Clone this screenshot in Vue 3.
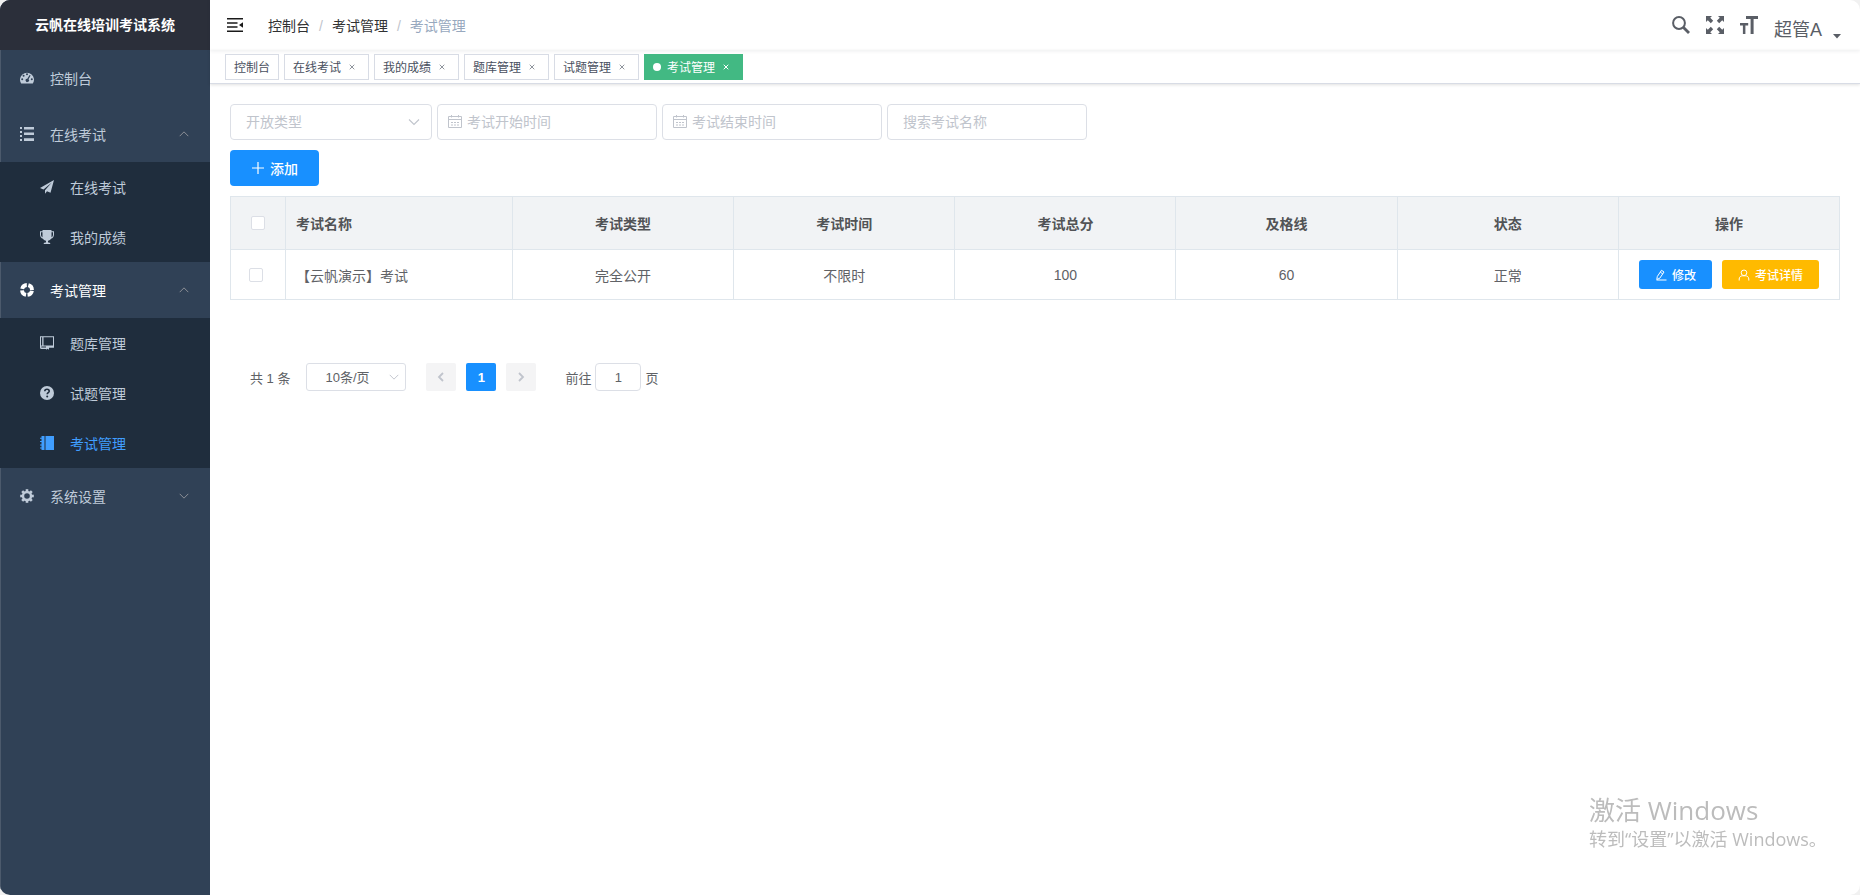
<script setup>
import { ref } from 'vue'

const menu = [
  { title: '控制台', icon: 'dashboard' },
  {
    title: '在线考试',
    icon: 'list',
    open: true,
    children: [
      { title: '在线考试', icon: 'guide' },
      { title: '我的成绩', icon: 'trophy' }
    ]
  },
  {
    title: '考试管理',
    icon: 'support',
    open: true,
    current: true,
    children: [
      { title: '题库管理', icon: 'bank' },
      { title: '试题管理', icon: 'help' },
      { title: '考试管理', icon: 'log', active: true }
    ]
  },
  { title: '系统设置', icon: 'gear', open: false, children: [] }
]

const tags = [
  { title: '控制台', fixed: true },
  { title: '在线考试' },
  { title: '我的成绩' },
  { title: '题库管理' },
  { title: '试题管理' },
  { title: '考试管理', active: true }
]

const columns = ['考试类型', '考试时间', '考试总分', '及格线', '状态', '操作']
const rows = [
  { name: '【云帆演示】考试', type: '完全公开', time: '不限时', total: 100, pass: 60, state: '正常' }
]

const openType = ref('')
const startTime = ref('')
const endTime = ref('')
const keyword = ref('')
const pageSize = ref('10')
const page = ref('1')

const teeth = [0, 45, 90, 135, 180, 225, 270, 315]
</script>

<template>
  <div class="frame">
    <svg class="defs" aria-hidden="true">
      <symbol id="i-dashboard" viewBox="0 0 14 14">
        <path fill-rule="evenodd" d="M1.2 12.4A7 6.8 0 1 1 12.8 12.4H1.2ZM7 2.3a1 1 0 1 0 0 2 1 1 0 0 0 0-2ZM3.6 3.7a1 1 0 1 0 0 2 1 1 0 0 0 0-2ZM2.2 7.2a1 1 0 1 0 0 2 1 1 0 0 0 0-2ZM11.8 7.2a1 1 0 1 0 0 2 1 1 0 0 0 0-2ZM9.6 4 7.3 7.7a1.7 1.7 0 1 0 1.2.5L10.6 4.600Z" />
      </symbol>
      <symbol id="i-list" viewBox="0 0 14 14">
        <path d="M0 0h2v2H0zM4 0h10v2.500H4zM0 4h2v2H0zM4 5.500h10V8H4zM0 8h2v2H0zM4 11.200h10V14H4zM0 12h2v2H0z" />
      </symbol>
      <symbol id="i-guide" viewBox="0 0 14 14">
        <path d="M14 0 0 7.900l3.500 1.500L11.800 2.500 5 10.200V13.800l2-2.600 3.500 1.500Z" />
      </symbol>
      <symbol id="i-trophy" viewBox="0 0 14 14">
        <path fill-rule="evenodd" d="M2.500 0h9v1.300H14V4.500c0 2.300-1.200 3.700-3 4.200-.6 1-1.600 1.700-3 2v1.800c1.400 0 2.200.4 2.400 1.500H3.600c.2-1.100 1-1.500 2.400-1.500v-1.800c-1.400-.3-2.400-1-3-2-1.800-.5-3-1.900-3-4.200V1.300h2.500ZM1 2.300v2.200c0 1.400.5 2.300 1.500 2.800V2.300Zm10.500 0v5C12.500 6.800 13 5.900 13 4.500V2.300Z" />
      </symbol>
      <symbol id="i-support" viewBox="0 0 14 14">
        <circle cx="7" cy="7" r="5" fill="none" stroke="currentColor" stroke-width="3.800" stroke-dasharray="6.250 1.604" stroke-dashoffset="-.8" />
      </symbol>
      <symbol id="i-bank" viewBox="0 0 14 14">
        <path fill-rule="evenodd" d="M0 .3h14v11.400H9V13.800L7.500 12.700 6 13.800V13H1.500A1.500 1.500 0 0 1 0 11.500ZM1 1.300v8.300h1.200V1.300Zm2.500 0v8.300H13V1.300ZM1.300 10.600v.9h4.700v-.9Z" />
      </symbol>
      <symbol id="i-help" viewBox="0 0 14 14">
        <circle cx="7" cy="7" r="7" />
        <path d="M4.800 5.300c0-1.300 1-2 2.200-2s2.200.8 2.200 1.900C9.200 6.700 7.200 6.700 7.200 8.300" fill="none" stroke="#1f2d3d" stroke-width="1.600" />
        <circle cx="7.200" cy="10.500" r="1" fill="#1f2d3d" />
      </symbol>
      <symbol id="i-log" viewBox="0 0 14 14">
        <path d="M1.500 0h3v14h-3v-1.500H0v-1h1.500v-2H0v-1h1.500v-2.500H0V5h1.500V2.800H0v-1h1.500zM5.500 0H14v14H5.500z" />
      </symbol>
      <symbol id="i-gear" viewBox="0 0 14 14">
        <circle cx="7" cy="7" r="4" fill="none" stroke="currentColor" stroke-width="2.400" />
        <rect v-for="a in teeth" :key="a" x="5.700" y=".2" width="2.600" height="2.600" :transform="`rotate(${a} 7 7)`" />
      </symbol>
      <symbol id="i-calendar" viewBox="0 0 14 14">
        <path d="M.5 1.500h13v11H.5zM.5 4.500h13M3.500 0v2.500M10.500 0v2.500M3 7.500h2M6 7.500h2M9 7.500h2M3 10h2M6 10h2M9 10h2" fill="none" stroke="currentColor" />
      </symbol>
      <symbol id="i-down" viewBox="0 0 14 14">
        <path d="m2 4.500 5 5 5-5" fill="none" stroke="currentColor" stroke-width="1.100" />
      </symbol>
    </svg>

    <aside class="sidebar">
      <h1 class="brand">云帆在线培训考试系统</h1>
      <nav>
        <ul class="menu">
          <li v-for="item in menu" :key="item.title">
            <a href="#" class="entry" :class="{ current: item.current }">
              <svg class="glyph"><use :href="'#i-' + item.icon" /></svg>
              <span>{{ item.title }}</span>
              <svg v-if="item.children" class="fold" :class="{ up: item.open }"><use href="#i-down" /></svg>
            </a>
            <ul v-if="item.open" class="submenu">
              <li v-for="sub in item.children" :key="sub.title">
                <a href="#" class="entry sub" :class="{ active: sub.active }">
                  <svg class="glyph"><use :href="'#i-' + sub.icon" /></svg>
                  <span>{{ sub.title }}</span>
                </a>
              </li>
            </ul>
          </li>
        </ul>
      </nav>
    </aside>

    <div class="main">
      <header class="navbar">
        <button class="bare" aria-label="折叠菜单">
          <svg width="16" height="14" viewBox="0 0 16 14">
            <path d="M0 0h16v1.600H0zM0 4.200h10.500v1.600H0zM0 8.200h10.500v1.600H0zM0 12.400h16V14H0zM16 4.200v5.600L12 7z" fill="#1a1a1a" />
          </svg>
        </button>
        <nav class="crumbs">
          <a href="#">控制台</a><i>/</i><a href="#">考试管理</a><i>/</i><span>考试管理</span>
        </nav>
        <div class="tools">
          <button class="bare" aria-label="搜索">
            <svg width="18" height="18" viewBox="0 0 18 18" fill="none" stroke="currentColor">
              <circle cx="7" cy="7" r="5.900" stroke-width="2" />
              <path d="m11.500 11.500 5.500 5.500" stroke-width="2.800" />
            </svg>
          </button>
          <button class="bare" aria-label="全屏">
            <svg width="18" height="18" viewBox="0 0 18 18" fill="currentColor">
              <path d="M0 0h6L4.200 1.800 7.200 4.800 4.800 7.200 1.800 4.200 0 6ZM18 0v6l-1.800-1.800-3 3-2.400-2.400 3-3L12 0ZM0 18v-6l1.800 1.800 3-3 2.400 2.400-3 3L6 18ZM18 18h-6l1.800-1.800-3-3 2.400-2.400 3 3L18 12Z" />
            </svg>
          </button>
          <button class="bare" aria-label="字号">
            <svg width="18" height="18" viewBox="0 0 18 18" fill="currentColor">
              <path d="M6 0h12v3h-4.400v15h-3V3H6zM0 7h8.200v2.600H5.400V18H2.900V9.600H0z" />
            </svg>
          </button>
          <button class="bare user">
            <span>超管A</span>
            <svg width="10" height="5" viewBox="0 0 10 5"><path d="M1 0h8L5 4.500z" fill="currentColor" /></svg>
          </button>
        </div>
      </header>

      <nav class="tags">
        <span v-for="tag in tags" :key="tag.title" class="tag" :class="{ on: tag.active }">
          <a href="#">{{ tag.title }}</a>
          <button v-if="!tag.fixed" class="bare close" aria-label="关闭">
            <svg width="6" height="6" viewBox="0 0 6 6"><path d="m.7.7 4.600 4.600M5.300.7.7 5.300" stroke="currentColor" /></svg>
          </button>
        </span>
      </nav>

      <main class="content">
        <form class="filters" @submit.prevent>
          <label class="field type">
            <select v-model="openType" aria-label="开放类型">
              <option value="">开放类型</option>
              <option value="1">完全公开</option>
            </select>
            <svg class="arrow"><use href="#i-down" /></svg>
          </label>
          <label class="field date">
            <svg class="lead"><use href="#i-calendar" /></svg>
            <input v-model="startTime" type="text" placeholder="考试开始时间" aria-label="考试开始时间" />
          </label>
          <label class="field date">
            <svg class="lead"><use href="#i-calendar" /></svg>
            <input v-model="endTime" type="text" placeholder="考试结束时间" aria-label="考试结束时间" />
          </label>
          <label class="field word">
            <input v-model="keyword" type="text" placeholder="搜索考试名称" aria-label="搜索考试名称" />
          </label>
        </form>

        <button class="btn add">
          <svg width="14" height="14" viewBox="0 0 14 14"><path d="M7 1v12M1 7h12" stroke="currentColor" stroke-width="1.200" /></svg>
          添加
        </button>

        <table class="grid">
          <colgroup>
            <col class="c-check" />
            <col class="c-name" />
            <col v-for="c in columns" :key="c" />
          </colgroup>
          <thead>
            <tr>
              <th><input type="checkbox" aria-label="全选" /></th>
              <th class="name">考试名称</th>
              <th v-for="c in columns" :key="c">{{ c }}</th>
            </tr>
          </thead>
          <tbody>
            <tr v-for="row in rows" :key="row.name">
              <td class="pick"><input type="checkbox" :aria-label="row.name" /></td>
              <td class="name">{{ row.name }}</td>
              <td>{{ row.type }}</td>
              <td>{{ row.time }}</td>
              <td>{{ row.total }}</td>
              <td>{{ row.pass }}</td>
              <td>{{ row.state }}</td>
              <td>
                <div class="ops">
                  <button class="btn mini">
                    <svg width="12" height="12" viewBox="0 0 12 12" fill="none" stroke="currentColor">
                      <path d="M1.800 10.500 2.300 7.500 6.500 1.300 9 3 4.800 9.200ZM5.300 3.200 7.800 4.900M1.500 11h10" />
                    </svg>
                    修改
                  </button>
                  <button class="btn mini amber">
                    <svg width="12" height="12" viewBox="0 0 12 12" fill="none" stroke="currentColor">
                      <circle cx="6" cy="3.800" r="2.800" />
                      <path d="M1.200 11.500V10C1.200 8 2.800 6.800 4.500 6.800h3c1.700 0 3.300 1.200 3.300 3.200v1.500" />
                    </svg>
                    考试详情
                  </button>
                </div>
              </td>
            </tr>
          </tbody>
        </table>

        <div class="pager">
          <span class="total">共 1 条</span>
          <label class="field size">
            <select v-model="pageSize" aria-label="每页条数">
              <option value="10">10条/页</option>
              <option value="20">20条/页</option>
            </select>
            <svg class="arrow"><use href="#i-down" /></svg>
          </label>
          <div class="pages">
            <button class="num" disabled aria-label="上一页">
              <svg width="12" height="12" viewBox="0 0 12 12"><path d="M8 2 4 6l4 4" fill="none" stroke="currentColor" stroke-width="1.800" /></svg>
            </button>
            <button class="num on">1</button>
            <button class="num" disabled aria-label="下一页">
              <svg width="12" height="12" viewBox="0 0 12 12"><path d="m4 2 4 4-4 4" fill="none" stroke="currentColor" stroke-width="1.800" /></svg>
            </button>
          </div>
          <label class="jump">前往<input v-model="page" type="text" />页</label>
        </div>
      </main>
    </div>

    <div class="notice">
      <p class="big">激活 Windows</p>
      <p>转到“设置”以激活 Windows。</p>
    </div>
  </div>
</template>

<style>
body {
  margin: 0;
  background: #f1f1f1;
}
</style>

<style scoped>
* {
  box-sizing: border-box;
}
.frame {
  display: flex;
  min-height: 100vh;
  border-radius: 10px;
  overflow: hidden;
  background: #fff;
  font-family: "Liberation Sans", "Noto Sans CJK SC", sans-serif;
  font-size: 14px;
  color: #606266;
}
.defs {
  position: absolute;
  width: 0;
  height: 0;
}
a {
  color: inherit;
  text-decoration: none;
}
button,
input,
select {
  font: inherit;
  color: inherit;
  margin: 0;
}
button {
  cursor: pointer;
}
.bare {
  display: flex;
  align-items: center;
  padding: 0;
  border: 0;
  background: none;
}

.sidebar {
  flex: none;
  width: 210px;
  background: #304156;
  box-shadow: inset 1px 0 #4c5a6c;
}
.brand {
  margin: 0;
  background: #2b2f3a;
  color: #fff;
  font-size: 14px;
  font-weight: bold;
  line-height: 50px;
  text-align: center;
}
.menu,
.submenu {
  margin: 0;
  padding: 0;
  list-style: none;
}
.submenu {
  background: #1f2d3d;
}
.entry {
  display: flex;
  align-items: center;
  gap: 16px;
  height: 56px;
  padding: 0 20px;
  color: #bfcbd9;
}
.entry.sub {
  height: 50px;
  padding-left: 40px;
}
.entry.current {
  color: #fff;
}
.entry.active {
  color: #409eff;
}
.glyph {
  width: 14px;
  height: 14px;
  fill: currentColor;
}
.fold {
  width: 12px;
  height: 12px;
  margin-left: auto;
  color: #909399;
}
.fold.up {
  transform: rotate(180deg);
}

.main {
  flex: 1;
  min-width: 0;
}
.navbar {
  display: flex;
  align-items: center;
  height: 50px;
  padding: 0 18px 0 17px;
  box-shadow: 0 1px 4px rgba(0, 21, 41, 0.08);
}
.crumbs {
  margin-left: 25px;
  color: #303133;
}
.crumbs i {
  margin: 0 9px;
  font-style: normal;
  color: #c0c4cc;
}
.crumbs span {
  color: #97a8be;
}
.tools {
  display: flex;
  align-items: center;
  gap: 16px;
  height: 50px;
  margin-left: auto;
  color: #5a5e66;
}
.user {
  align-items: flex-end;
  gap: 10px;
  padding-top: 10px;
  font-size: 18px;
  line-height: 26px;
}
.user svg {
  margin-bottom: 4px;
}

.tags {
  display: flex;
  align-items: center;
  gap: 5px;
  height: 34px;
  padding-left: 15px;
  border-bottom: 1px solid #d8dce5;
  box-shadow: 0 1px 3px rgba(0, 0, 0, 0.12);
}
.tag {
  display: flex;
  align-items: center;
  gap: 8px;
  height: 26px;
  padding: 0 8px;
  border: 1px solid #d8dce5;
  color: #495060;
  font-size: 12px;
}
.tag .close {
  width: 11px;
  color: #8f949c;
}
.tag.on {
  background: #42b983;
  border-color: #42b983;
  color: #fff;
}
.tag.on::before {
  content: "";
  width: 8px;
  height: 8px;
  margin-right: -2px;
  border-radius: 50%;
  background: #fff;
}
.tag.on .close {
  color: #fff;
}

.content {
  padding: 20px;
}
.filters {
  display: flex;
  flex-wrap: wrap;
  gap: 5px;
}
.field {
  display: flex;
  align-items: center;
  position: relative;
  height: 36px;
  border: 1px solid #dcdfe6;
  border-radius: 4px;
  background: #fff;
}
.field input,
.field select {
  flex: 1;
  min-width: 0;
  height: 100%;
  padding: 0 15px;
  border: 0;
  outline: 0;
  background: none;
  appearance: none;
}
.field.type {
  width: 202px;
}
.field.type select,
.field input::placeholder {
  color: #c0c4cc;
  opacity: 1;
}
.field.date {
  width: 220px;
  padding-left: 10px;
}
.field.date input {
  padding-left: 5px;
}
.field.word {
  width: 200px;
}
.lead,
.arrow {
  flex: none;
  width: 14px;
  height: 14px;
  color: #c0c4cc;
}
.arrow {
  position: absolute;
  right: 10px;
  pointer-events: none;
}

.btn {
  display: inline-flex;
  align-items: center;
  gap: 5px;
  border: 0;
  border-radius: 3px;
  background: #1890ff;
  color: #fff;
  font-weight: 500;
}
.add {
  height: 36px;
  margin: 10px 0;
  padding: 0 21px;
  border-radius: 4px;
}
.mini {
  height: 29px;
  padding: 0 16px;
  font-size: 12px;
}
.amber {
  background: #ffba00;
}
.ops {
  display: flex;
  justify-content: center;
  gap: 10px;
}

.grid {
  width: 100%;
  table-layout: fixed;
  border-collapse: collapse;
}
.c-check {
  width: 55px;
}
.c-name {
  width: 227px;
}
.grid th,
.grid td {
  height: 50px;
  padding: 0 10px;
  border: 1px solid #dfe6ec;
  text-align: center;
}
.grid th {
  height: 53px;
  background: #f1f3f5;
  color: #515356;
  font-weight: bold;
}
.grid .name {
  text-align: left;
}
.grid .pick {
  padding-right: 14px;
}
.grid input {
  display: block;
  width: 14px;
  height: 14px;
  margin: 0 auto;
  border: 1px solid #dcdfe6;
  border-radius: 2px;
  background: #fff;
  appearance: none;
}

.pager {
  display: flex;
  align-items: center;
  margin-top: 63px;
  padding-left: 20px;
  font-size: 13px;
}
.field.size {
  width: 100px;
  height: 28px;
  margin: 0 20px 0 16px;
  border-radius: 3px;
}
.field.size select {
  padding-left: 18px;
}
.field.size .arrow {
  right: 5px;
  width: 12px;
  height: 12px;
}
.pages {
  display: flex;
  gap: 10px;
}
.num {
  display: flex;
  align-items: center;
  justify-content: center;
  width: 30px;
  height: 28px;
  padding: 0;
  border: 0;
  border-radius: 2px;
  background: #f4f4f5;
  color: #c0c4cc;
  font-weight: bold;
}
.num.on {
  background: #1890ff;
  color: #fff;
}
.jump {
  display: flex;
  align-items: center;
  gap: 4px;
  margin-left: 29px;
}
.jump input {
  width: 46px;
  height: 28px;
  padding: 0;
  border: 1px solid #dcdfe6;
  border-radius: 4px;
  text-align: center;
}

.notice {
  position: fixed;
  right: 34px;
  bottom: 44px;
  width: 237px;
  color: #bcbcbc;
  font-family: "Open Sans", "Noto Sans CJK SC", sans-serif;
  font-size: 18px;
  line-height: 24px;
  white-space: nowrap;
  pointer-events: none;
}
.notice p {
  margin: 0;
}
.notice .big {
  font-size: 26px;
  line-height: 34px;
}
</style>
